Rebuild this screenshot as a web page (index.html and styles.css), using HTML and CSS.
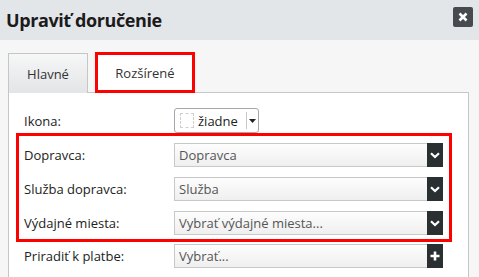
FILE: index.html
```html
<!DOCTYPE html>
<html lang="sk">

<head>
  <meta charset="UTF-8">
  <title>Upraviť doručenie</title>
  <link rel="stylesheet" href="styles.css">
</head>

<body>

  <div class="dialog">
    <div class="dialog-head">
      <h1>Upraviť doručenie</h1>
      <button class="close" title="Zavrieť">
        <svg width="10" height="10" viewBox="0 0 10 10">
          <path d="M1.5 1.5 L8.5 8.5 M8.5 1.5 L1.5 8.5" stroke="#fff" stroke-width="2.6" />
        </svg>
      </button>
    </div>

    <div class="dialog-body">
      <div class="tabs">
        <div class="tab">Hlavné</div>
        <div class="tab tab-active">Rozšírené</div>
      </div>

      <div class="panel">
        <div class="row row-icon">
          <label>Ikona:</label>
          <div class="icon-select">
            <span class="icon-empty"></span>
            <span class="icon-text">žiadne</span>
            <span class="icon-caret">
              <svg width="7" height="4" viewBox="0 0 7 4"><path d="M0 0 H7 L3.5 4 Z" fill="#222" /></svg>
            </span>
          </div>
        </div>

        <div class="group-marked">
          <div class="row">
            <label>Dopravca:</label>
            <div class="select">
              <span class="select-text">Dopravca</span>
              <span class="select-btn">
                <svg width="10" height="7" viewBox="0 0 10 7"><path d="M1 1.2 L5 5 L9 1.2" stroke="#fff" stroke-width="2.2" fill="none" /></svg>
              </span>
            </div>
          </div>
          <div class="row">
            <label>Služba dopravca:</label>
            <div class="select">
              <span class="select-text">Služba</span>
              <span class="select-btn">
                <svg width="10" height="7" viewBox="0 0 10 7"><path d="M1 1.2 L5 5 L9 1.2" stroke="#fff" stroke-width="2.2" fill="none" /></svg>
              </span>
            </div>
          </div>
          <div class="row">
            <label>Výdajné miesta:</label>
            <div class="select">
              <span class="select-text">Vybrať výdajné miesta...</span>
              <span class="select-btn">
                <svg width="10" height="7" viewBox="0 0 10 7"><path d="M1 1.2 L5 5 L9 1.2" stroke="#fff" stroke-width="2.2" fill="none" /></svg>
              </span>
            </div>
          </div>
        </div>

        <div class="row row-last">
          <label>Priradiť k platbe:</label>
          <div class="select">
            <span class="select-text">Vybrať...</span>
            <span class="select-btn">
              <svg width="10" height="10" viewBox="0 0 10 10"><path d="M5 0.5 V9.5 M0.5 5 H9.5" stroke="#fff" stroke-width="2.6" /></svg>
            </span>
          </div>
        </div>
      </div>
    </div>
  </div>

</body>

</html>
```

FILE: styles.css
```css
* {
  box-sizing: border-box;
}

body {
  margin: 0;
  font-family: "Open Sans", Arial, sans-serif;
  background-color: #f6f6f6;
  color: #222;
  overflow: hidden;
}

/* HEADER */

.dialog-head {
  height: 40px;
  background-color: #e3e6e9;
  display: flex;
  align-items: center;
  justify-content: space-between;
  padding: 0 6px 0 6px;
}

.dialog-head h1 {
  margin: 0;
  font-size: 18px;
  font-weight: 700;
  color: #1b1b1b;
  letter-spacing: -0.4px;
}

.close {
  width: 20px;
  height: 20px;
  border: 0 none;
  border-radius: 2px;
  background-color: #474b4f;
  padding: 0;
  display: flex;
  align-items: center;
  justify-content: center;
  margin-top: -6px;
}

/* TABS */

.dialog-body {
  padding: 12px 10px 0 8px;
}

.tabs {
  display: flex;
  gap: 7px;
  height: 40px;
}

.tab {
  width: 80px;
  height: 40px;
  margin-top: 1px;
  border: 1px solid #c6c6c6;
  border-bottom: 0 none;
  background: linear-gradient(#f6f7f7, #e2e4e6);
  font-size: 13px;
  color: #333;
  display: flex;
  align-items: center;
  justify-content: center;
}

.tab-active {
  width: 100px;
  height: 41px;
  margin-top: 0;
  background: #fff;
  border: 3px solid #ff0000;
  padding-top: 1px;
}

/* PANEL */

.panel {
  background-color: #fff;
  border: 1px solid #c6c6c6;
  border-bottom: 0 none;
  height: 185px;
  padding: 15px 0 0 15px;
}

.row {
  display: flex;
  align-items: center;
  height: 24px;
  width: 419px;
}

.row label {
  width: 150px;
  font-size: 13px;
  color: #222;
}

.row-icon {
  height: 25px;
}

.row-last {
  margin-top: 2px;
}

.group-marked {
  margin-left: -8px;
  width: 436px;
  border: 3px solid #ff0000;
  padding: 7px 6px 4px 5px;
  display: flex;
  flex-direction: column;
  gap: 10px;
}

/* ICON SELECT */

.icon-select {
  width: 85px;
  height: 25px;
  border: 1px solid #a2a8ae;
  border-radius: 3px;
  background: #fff;
  display: flex;
  align-items: center;
  padding-left: 5px;
}

.icon-empty {
  width: 14px;
  height: 15px;
  border: 1px dashed #d0d0d0;
}

.icon-text {
  font-size: 13px;
  color: #222;
  margin-left: 4px;
  flex: 1;
}

.icon-caret {
  width: 12px;
  height: 17px;
  border-left: 1px solid #c8c8c8;
  display: flex;
  align-items: center;
  justify-content: center;
}

/* SELECT */

.select {
  width: 269px;
  height: 24px;
  display: flex;
  border: 1px solid #c8c8c8;
  border-right: 0 none;
  background: linear-gradient(#fdfdfd, #efefef);
}

.select-text {
  flex: 1;
  font-size: 13px;
  color: #555;
  padding-left: 4px;
  line-height: 22px;
  white-space: nowrap;
}

.select-btn {
  width: 16px;
  margin: -1px 0;
  background-color: #2a2f32;
  display: flex;
  align-items: center;
  justify-content: center;
}
```
